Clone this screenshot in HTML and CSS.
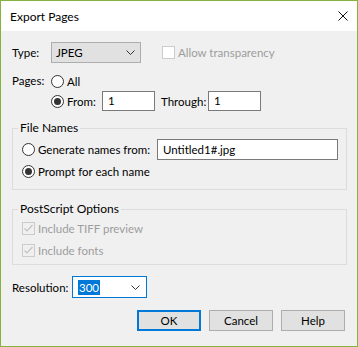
FILE: index.html
```html
<!DOCTYPE html>
<html>
<head>
<meta charset="utf-8">
<link rel="stylesheet" href="styles.css">
</head>
<body>
<div class="window">
  <div class="titlebar">
    <span class="title">Export Pages</span>
    <svg class="close" width="10" height="10" viewBox="0 0 10 10"><path d="M0.5 0.5 L9.5 9.5 M9.5 0.5 L0.5 9.5" stroke="#111" stroke-width="1" fill="none"/></svg>
  </div>
  <div class="content">
    <div class="row type-row">
      <span class="lbl lbl-type">Type:</span>
      <div class="select type-select"><span class="sel-text">JPEG</span><svg class="chev" width="9" height="5" viewBox="0 0 9 5"><path d="M0.5 0.5 L4.5 4.5 L8.5 0.5" stroke="#333" fill="none"/></svg></div>
      <span class="check disabled"><span class="box"></span><span class="ctext">Allow transparency</span></span>
    </div>
    <div class="pages">
      <span class="lbl lbl-type pages-lbl">Pages:</span>
      <div class="pages-col">
        <div class="radio-row"><span class="radio"></span><span>All</span></div>
        <div class="radio-row from-row">
          <span class="radio-lbl"><span class="radio on"></span><span>From:</span></span>
          <div class="input small">1</div>
          <span class="through">Through:</span>
          <div class="input small">1</div>
        </div>
      </div>
    </div>
    <fieldset class="group names">
      <legend>File Names</legend>
      <div class="radio-row gen-row">
        <span class="gen-lbl"><span class="radio"></span><span>Generate names from:</span></span>
        <div class="input wide">Untitled1#.jpg</div>
      </div>
      <div class="radio-row"><span class="radio on"></span><span>Prompt for each name</span></div>
    </fieldset>
    <fieldset class="group ps">
      <legend>PostScript Options</legend>
      <div class="radio-row check disabled"><span class="box"><svg width="11" height="11" viewBox="0 0 11 11"><path d="M1.5 5.5 L4 8 L9.5 2" stroke="#c2c2c2" stroke-width="1.2" fill="none"/></svg></span><span class="ctext">Include TIFF preview</span></div>
      <div class="radio-row check disabled"><span class="box"><svg width="11" height="11" viewBox="0 0 11 11"><path d="M1.5 5.5 L4 8 L9.5 2" stroke="#c2c2c2" stroke-width="1.2" fill="none"/></svg></span><span class="ctext">Include fonts</span></div>
    </fieldset>
    <div class="row res-row">
      <span class="lbl lbl-res">Resolution:</span>
      <div class="select res-select"><span class="sel-hl">300</span><svg class="chev" width="9" height="5" viewBox="0 0 9 5"><path d="M0.5 0.5 L4.5 4.5 L8.5 0.5" stroke="#333" fill="none"/></svg></div>
    </div>
    <div class="buttons">
      <div class="btn default">OK</div>
      <div class="btn">Cancel</div>
      <div class="btn">Help</div>
    </div>
  </div>
</div>
</body>
</html>
```
FILE: styles.css
```css
* { box-sizing: border-box; }
html, body { margin: 0; padding: 0; }
body {
  font-family: Lato, "Liberation Sans", sans-serif;
  font-size: 11.5px;
  color: #000;
  background: #f0f0f0;
  white-space: nowrap;
}
.window {
  width: 358px;
  height: 347px;
  border: 1px solid #86b33f;
  background: #f0f0f0;
  display: flex;
  flex-direction: column;
}
.titlebar {
  height: 30px;
  background: #fff;
  display: flex;
  align-items: center;
  justify-content: space-between;
  padding: 0 9px 0 9px;
  flex: none;
}
.title { font-size: 12px; line-height: 16px; margin-top: 1px; }
.content {
  display: flex;
  flex-direction: column;
}
.row { display: flex; align-items: center; }
.lbl, .radio-lbl, .gen-lbl, .through, .select, .input, .btn { flex: none; }
.type-row { margin-top: 11px; padding-left: 11px; height: 21px; }
.lbl-type { width: 39px; }
.select {
  height: 21px;
  border: 1px solid #adadad;
  background: #e1e1e1;
  display: flex;
  align-items: center;
  justify-content: space-between;
  padding: 0 5px 0 4px;
}
.type-select { width: 90px; }
.chev { display: block; }
.check { display: flex; align-items: center; }
.type-row .check { margin-left: 21px; }
.box {
  width: 13px;
  height: 13px;
  border: 1px solid #cccccc;
  background: #f0f0f0;
  display: inline-flex;
  align-items: center;
  justify-content: center;
  margin-right: 3px;
  flex: none;
}
.type-row .box { background: #fff; }
.ctext { color: #9d9d9d; }
.pages { display: flex; padding-left: 11px; margin-top: 10px; }
.pages-lbl { line-height: 16px; height: 16px; }
.pages-col { display: flex; flex-direction: column; gap: 2px; }
.radio-row { display: flex; align-items: center; height: 16px; }
.radio {
  width: 13px;
  height: 13px;
  border: 1px solid #333;
  border-radius: 50%;
  background: #fff;
  margin-right: 3px;
  display: inline-flex;
  align-items: center;
  justify-content: center;
  flex: none;
}
.radio.on::after {
  content: "";
  width: 7px;
  height: 7px;
  border-radius: 50%;
  background: #333;
}
.from-row { height: 20px; }
.radio-lbl { width: 51px; display: flex; align-items: center; }
.input {
  height: 20px;
  border: 1px solid #7a7a7a;
  background: #fff;
  padding: 0 5px;
  line-height: 18px;
}
.small { width: 53px; }
.through { width: 47px; margin-left: 6px; }
.group {
  margin: 0 10px 0 11px;
  border: 1px solid #dcdcdc;
  padding: 3px 9px 0 9px;
  min-width: 0;
}
.group legend {
  padding: 0 2px;
  margin-left: -4px;
  line-height: 16px;
  font-size: 12px;
}
.names { margin-top: 9px; padding-bottom: 10px; }
.gen-row { height: 21px; margin-bottom: 3px; }
.gen-lbl { width: 135px; display: flex; align-items: center; }
.wide { width: 181px; height: 21px; line-height: 19px; }
.ps { margin-top: 11px; padding-top: 3px; padding-bottom: 6px; }
.ps .radio-row + .radio-row { margin-top: 6px; }
.ps .box { background: #f0f0f0; }
.res-row { margin-top: 11px; padding-left: 11px; height: 22px; }
.lbl-res { width: 60px; }
.res-select {
  width: 75px;
  height: 22px;
  border: 1px solid #0078d7;
  background: #fff;
  padding: 0 6px 0 5px;
}
.sel-hl { background: #0078d7; color: #fff; line-height: 15px; padding: 0 1px; }
.buttons {
  display: flex;
  justify-content: flex-end;
  gap: 8px;
  padding-right: 12px;
  margin-top: 12px;
}
.btn {
  width: 64px;
  height: 21px;
  border: 1px solid #adadad;
  background: #e1e1e1;
  display: flex;
  align-items: center;
  justify-content: center;
}
.btn.default { border: 2px solid #0078d7; }
```
